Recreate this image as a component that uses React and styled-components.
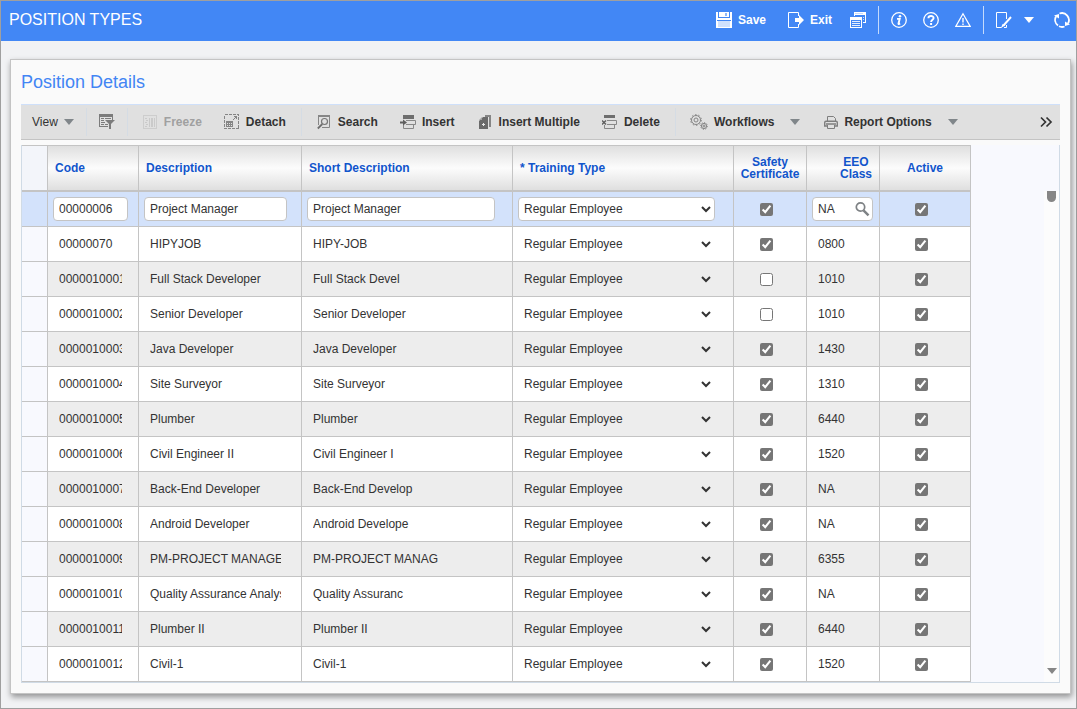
import React, { useState } from 'react';
import styled, { createGlobalStyle, css } from 'styled-components';

const ROWS = [
  { code: '00000006', description: 'Project Manager', short: 'Project Manager', safety: true, eeo: 'NA' },
  { code: '00000070', description: 'HIPYJOB', short: 'HIPY-JOB', safety: true, eeo: '0800' },
  { code: '0000010001', description: 'Full Stack Developer', short: 'Full Stack Devel', safety: false, eeo: '1010' },
  { code: '0000010002', description: 'Senior Developer', short: 'Senior Developer', safety: false, eeo: '1010' },
  { code: '0000010003', description: 'Java Developer', short: 'Java Developer', safety: true, eeo: '1430' },
  { code: '0000010004', description: 'Site Surveyor', short: 'Site Surveyor', safety: true, eeo: '1310' },
  { code: '0000010005', description: 'Plumber', short: 'Plumber', safety: true, eeo: '6440' },
  { code: '0000010006', description: 'Civil Engineer II', short: 'Civil Engineer I', safety: true, eeo: '1520' },
  { code: '0000010007', description: 'Back-End Developer', short: 'Back-End Develop', safety: true, eeo: 'NA' },
  { code: '0000010008', description: 'Android Developer', short: 'Android Develope', safety: true, eeo: 'NA' },
  { code: '0000010009', description: 'PM-PROJECT MANAGER', short: 'PM-PROJECT MANAG', safety: true, eeo: '6355' },
  { code: '0000010010', description: 'Quality Assurance Analyst', short: 'Quality Assuranc', safety: true, eeo: 'NA' },
  { code: '0000010011', description: 'Plumber II', short: 'Plumber II', safety: true, eeo: '6440' },
  { code: '0000010012', description: 'Civil-1', short: 'Civil-1', safety: true, eeo: '1520' },
];

export default function App() {
  const [selected, setSelected] = useState(0);

  return (
    <Page>
      <GlobalStyle />
      <Header>
        <PageTitle>POSITION TYPES</PageTitle>
        <HeaderGroup>
          <HeaderButton><SaveIcon />Save</HeaderButton>
          <HeaderButton $left={22}><ExitIcon />Exit</HeaderButton>
          <HeaderButton $left={18} aria-label="Windows"><WindowsIcon /></HeaderButton>
        </HeaderGroup>
        <HeaderGroup>
          <HeaderButton aria-label="Information"><InfoIcon /></HeaderButton>
          <HeaderButton $left={16} aria-label="Help"><HelpIcon /></HeaderButton>
          <HeaderButton $left={16} aria-label="Warnings"><WarningIcon /></HeaderButton>
        </HeaderGroup>
        <HeaderGroup>
          <HeaderButton aria-label="Edit page"><EditIcon /></HeaderButton>
          <HeaderButton $left={12} aria-label="Edit options"><Caret $color="#fff" /></HeaderButton>
          <HeaderButton $left={20} aria-label="Refresh"><RefreshIcon /></HeaderButton>
        </HeaderGroup>
      </Header>

      <Main>
        <Panel>
          <PanelTitle>Position Details</PanelTitle>
          <Toolbar>
            <ViewGroup>
              <ToolButton $plain>View<Caret /></ToolButton>
            </ViewGroup>
            <FilterGroup>
              <ToolButton aria-label="Query by example"><FilterIcon /></ToolButton>
            </FilterGroup>
            <ToolGroup>
              <ToolButton disabled><FreezeIcon />Freeze</ToolButton>
              <ToolButton><DetachIcon />Detach</ToolButton>
            </ToolGroup>
            <ToolGroup>
              <ToolButton><SearchPageIcon />Search</ToolButton>
              <ToolButton><InsertIcon />Insert</ToolButton>
              <ToolButton><InsertMultipleIcon />Insert Multiple</ToolButton>
              <ToolButton><DeleteIcon />Delete</ToolButton>
            </ToolGroup>
            <ToolGroup>
              <ToolButton><WorkflowsIcon />Workflows<MenuCaret /></ToolButton>
              <ToolButton><PrinterIcon />Report Options<MenuCaret /></ToolButton>
            </ToolGroup>
            <OverflowButton aria-label="More"><MoreIcon /></OverflowButton>
          </Toolbar>

          <GridArea>
            <Table>
              <colgroup>
                <Col $width={26} />
                <Col $width={91} />
                <Col $width={163} />
                <Col $width={211} />
                <Col $width={221} />
                <Col $width={73} />
                <Col $width={73} />
                <Col $width={91} />
              </colgroup>
              <thead>
                <tr>
                  <CornerCell />
                  <HeadCell>Code</HeadCell>
                  <HeadCell>Description</HeadCell>
                  <HeadCell>Short Description</HeadCell>
                  <HeadCell>* Training Type</HeadCell>
                  <HeadCell $align="center">Safety<br />Certificate</HeadCell>
                  <HeadCell $align="right"><Stacked>EEO<br />Class</Stacked></HeadCell>
                  <HeadCell $align="center">Active</HeadCell>
                </tr>
              </thead>
              <tbody>
                {ROWS.map((row, i) => (
                  <Row key={row.code} $selected={i === selected} onFocus={() => setSelected(i)}>
                    <RowHandle $selected={i === selected} />
                    <Cell><Field $width={75} $active={i === selected} aria-label="Code" defaultValue={row.code} /></Cell>
                    <Cell><Field $width={143} $active={i === selected} aria-label="Description" defaultValue={row.description} /></Cell>
                    <Cell><Field $width={188} $active={i === selected} aria-label="Short Description" defaultValue={row.short} /></Cell>
                    <Cell>
                      <Picker $active={i === selected} aria-label="Training Type" defaultValue="Regular Employee">
                        <option>Regular Employee</option>
                      </Picker>
                    </Cell>
                    <CheckCell><Check aria-label="Safety Certificate" defaultChecked={row.safety} /></CheckCell>
                    <Cell>
                      <Lookup $active={i === selected}>
                        <LookupInput aria-label="EEO Class" defaultValue={row.eeo} />
                        {i === selected && <LookupButton aria-label="Look up EEO Class"><LensIcon /></LookupButton>}
                      </Lookup>
                    </Cell>
                    <CheckCell><Check aria-label="Active" defaultChecked /></CheckCell>
                  </Row>
                ))}
              </tbody>
            </Table>
            <ScrollTrack>
              <ScrollThumb />
              <Caret $color="#868686" />
            </ScrollTrack>
          </GridArea>
        </Panel>
      </Main>
    </Page>
  );
}


// icons of the blue header
const SaveIcon = () => (
  <Icon viewBox="0 0 16 16" shapeRendering="crispEdges">
    <path fill="#fff" d="M0 0h15l1 1v15H0z" />
    <path fill="#4287f5" d="M2 0h1v5H2zM13 0h1v5h-1zM2 5h12v1H2z" />
    <path fill="#8fb8f9" d="M9 1h2v3H9z" />
    <path fill="#4287f5" d="M1 8h14v1H1z" />
    <path fill="#d0e1fd" d="M2 9h12v6H2z" />
  </Icon>
);

const ExitIcon = () => (
  <Icon viewBox="0 0 16 16">
    <path fill="none" stroke="#fff" d="M10.500 4V.5H.5v15h10V12" />
    <path fill="#fff" d="M7 6h4V3l5 5-5 5v-3H7z" />
  </Icon>
);

const WindowsIcon = () => (
  <Icon viewBox="0 0 16 16" shapeRendering="crispEdges">
    <path fill="#fff" d="M4 0h12v11h-3v-1h2V3H5v1H4z" />
    <path fill="#c9dcfc" d="M5 1h8v1H5zM13 5h1v1h-1zM13 7h1v1h-1z" />
    <path fill="#fff" d="M0 5h12v11H0z" />
    <path fill="#4287f5" d="M1 8h10v7H1z" />
    <path fill="#e6effe" d="M2 9h8v1H2zM2 11h8v1H2zM2 13h8v1H2z" />
  </Icon>
);

const InfoIcon = () => (
  <Icon viewBox="0 0 16 16">
    <circle cx="8" cy="8" r="7.300" fill="none" stroke="#fff" strokeWidth="1.300" />
    <circle cx="9" cy="4.300" r="1.300" fill="#fff" />
    <path fill="none" stroke="#fff" strokeWidth="1.900" d="M6 6.900h2.700L7.500 11.500q-.2.900 1.700.1" />
  </Icon>
);

const HelpIcon = () => (
  <Icon viewBox="0 0 16 16">
    <circle cx="8" cy="8" r="7.300" fill="none" stroke="#fff" strokeWidth="1.300" />
    <path fill="none" stroke="#fff" strokeWidth="1.900" d="M5.400 6.300C5.400 3.300 10.600 3.300 10.600 6c0 1.700-2.500 1.800-2.500 4" />
    <path fill="#fff" d="M7.100 11h2v2h-2z" />
  </Icon>
);

const WarningIcon = () => (
  <Icon viewBox="0 0 16 16">
    <path fill="none" stroke="#fff" strokeWidth="1.200" d="M8 1.800 15.200 14.400H.8z" />
    <path fill="none" stroke="#fff" strokeWidth="1.400" d="M8 6v4.500M8 11.500V13" />
  </Icon>
);

const EditIcon = () => (
  <Icon viewBox="0 0 16 16">
    <path fill="none" stroke="#fff" d="M10.500 7V.5H.5v15h5M10.500 13v2.500H8" />
    <path stroke="#fff" strokeWidth="1.900" d="M15 5 7.500 13.500" />
    <path fill="#fff" d="m6.500 12 2.500 1.500L5 16z" />
  </Icon>
);

const RefreshIcon = () => (
  <Icon viewBox="0 0 16 16">
    <path fill="none" stroke="#fff" strokeWidth="1.800" d="M4 13.500A7 7 0 0 1 2 4.500M5.500 1.500A7 7 0 0 1 14 11.500M10.500 14.500A7 7 0 0 1 5 14.300" />
    <path fill="#fff" d="M0 3.500 5 2v4.500zM16 12.500 11 14V9.500z" />
  </Icon>
);

// icons of the table toolbar
const FilterIcon = () => (
  <Icon viewBox="0 0 16 16">
    <path fill="#7c7c7c" d="M0 0h14v3H0zM0 0h1v13H0zM0 12h9v1H0zM13 0h1v6h-1zM2 4h3v1H2zM6 4h6v1H6zM2 6h3v1H2zM2 8h4v1H2zM2 10h3v1H2zM6 10h3v1H6z" />
    <path fill="#7c7c7c" d="M6 6h10l-4 4v5h-2v-5z" />
  </Icon>
);

const FreezeIcon = () => (
  <Icon viewBox="0 0 16 16" shapeRendering="crispEdges">
    <path fill="none" stroke="#cdcdcd" d="M1.500 1.500h13v13h-13z" />
    <path fill="#cacaca" d="M3 4h2v1H3zM4 6h2v1H4zM3 8h2v1H3zM4 10h2v1H4zM3 12h2v1H3zM7 4h1v9H7zM9 4h2v9H9zM12 4h1v9h-1z" />
  </Icon>
);

const DetachIcon = () => (
  <Icon viewBox="0 0 16 16" shapeRendering="crispEdges">
    <path fill="none" stroke="#858585" strokeDasharray="3 1" d="M.5.500h14v14H.5z" />
    <path fill="#858585" d="M2 7h7v6H2z" />
    <path fill="#e0e0e0" d="M3 9h1v1H3zM5 9h1v1H5zM7 9h1v1H7zM3 11h1v1H3zM5 11h1v1H5zM7 11h1v1H7z" />
    <path fill="#858585" d="M10 2h3v3h-1V4h-1v1h-1v1H9V5h1V4h1V3h-1z" />
  </Icon>
);

const SearchPageIcon = () => (
  <Icon viewBox="0 0 16 16">
    <path fill="none" stroke="#868686" d="M2.500 11V1.500h11v12H6" />
    <path fill="#868686" d="M2 1h12v2H2z" />
    <circle cx="8.500" cy="7.500" r="3" fill="none" stroke="#777" strokeWidth="1.200" />
    <path stroke="#707070" strokeWidth="1.800" d="m6.300 10-4.500 4.500" />
  </Icon>
);

const InsertIcon = () => (
  <Icon viewBox="0 0 16 16">
    <path fill="#6e6e6e" d="M3 1h11v4H3z" />
    <path fill="none" stroke="#888" d="M6 6.500h9.500v4H6M13.500 11v3.500h-10V11" />
    <path fill="#606060" d="M0 7.500h3V5.500l4 3-4 3v-2H0z" />
  </Icon>
);

const InsertMultipleIcon = () => (
  <Icon viewBox="0 0 16 16">
    <path fill="#858585" d="M8 1h6v12h-2V3H8z" />
    <path fill="#6a6a6a" d="M6 3h5v12H2V7z" />
    <path fill="#a5a5a5" d="M2 6 5 3v3z" />
    <path fill="#e8e8e8" d="M6 9h1v1h1v1H7v1H6v-1H5v-1h1z" />
  </Icon>
);

const DeleteIcon = () => (
  <Icon viewBox="0 0 16 16">
    <path fill="#6e6e6e" d="M2 1h11v3H2z" />
    <path fill="none" stroke="#888" d="M5 6.500h9.500v4H5M12.500 11v3.500h-10V11" />
    <path stroke="#606060" strokeWidth="1.400" d="m0 6.500 4 4M4 6.500l-4 4" />
  </Icon>
);

const WorkflowsIcon = () => (
  <WideIcon viewBox="0 0 18 16">
    <g fill="none" stroke="#858585">
      <circle cx="6" cy="6" r="4.500" />
      <circle cx="6" cy="6" r="2" />
      <circle cx="6" cy="6" r="5.400" strokeDasharray="1.500 1.900" />
      <circle cx="14" cy="12" r="2.600" />
      <circle cx="14" cy="12" r="1" />
      <circle cx="14" cy="12" r="3.400" strokeDasharray="1.200 1.400" />
    </g>
  </WideIcon>
);

const PrinterIcon = () => (
  <Icon viewBox="0 0 16 16">
    <path fill="none" stroke="#7e7e7e" d="M5.500 7V2.500h6l2 2V7M5.500 11v3.500h7V11" />
    <path fill="none" stroke="#7e7e7e" strokeWidth="1.400" d="M5 12H2.700V8.500q0-1.300 1.300-1.300h10q1.300 0 1.300 1.300V12H13M4 10h10" />
  </Icon>
);

const MoreIcon = () => (
  <Icon viewBox="0 0 16 16">
    <path fill="none" stroke="#333" strokeWidth="1.700" d="m3 3.500 4.500 4.500L3 12.500M8.500 3.500 13 8l-4.500 4.500" />
  </Icon>
);

const LensIcon = () => (
  <Icon viewBox="0 0 16 16">
    <circle cx="6.500" cy="6" r="4.200" fill="none" stroke="#7e8285" strokeWidth="1.700" />
    <path stroke="#7e8285" strokeWidth="2.400" d="m9.500 9.300 5 5" />
  </Icon>
);


const GlobalStyle = createGlobalStyle`
  * { box-sizing: border-box; }
  body {
    margin: 0;
    font-family: "Liberation Sans", Arial, sans-serif;
    font-size: 12px;
    color: #333;
  }
  button, input, select { font: inherit; color: inherit; }
`;

const Page = styled.div`
  display: flex;
  flex-direction: column;
  min-height: 100vh;
  border: 1px solid #9f9f9f;
  background: #f1f2f4;
`;

// blue bar on top
const Header = styled.header`
  display: flex;
  align-items: center;
  height: 40px;
  padding: 0 6px 2px 8px;
  background: #4287f5;
  color: #fff;
`;

const PageTitle = styled.h1`
  flex: 1;
  margin: 0;
  font-size: 16px;
  font-weight: normal;
`;

const HeaderGroup = styled.div`
  display: flex;
  align-items: center;
  height: 28px;

  & + & {
    margin-left: 12px;
    padding-left: 12px;
    border-left: 1px solid #c4dafc;
  }
`;

const HeaderButton = styled.button`
  display: flex;
  align-items: center;
  gap: 6px;
  margin: 0 0 0 ${(p) => p.$left || 0}px;
  padding: 0;
  border: 0;
  background: none;
  font-weight: bold;
`;

const Icon = styled.svg`
  flex: none;
  display: block;
  width: 16px;
  height: 16px;
`;

const WideIcon = styled(Icon)`
  width: 18px;
`;

const Caret = styled.span`
  border: 5px solid transparent;
  border-top: 6px solid ${(p) => p.$color || '#80868a'};
  border-bottom: 0;
`;

const MenuCaret = styled(Caret)`
  margin-left: 10px;
`;

const Main = styled.main`
  padding: 18px 5px 14px 9px;
`;

const Panel = styled.section`
  padding: 0 10px 10px;
  border: 1px solid #c4c4c4;
  background: #fafafa;
  box-shadow: 1px 3px 6px rgba(0, 0, 0, 0.4);
`;

const PanelTitle = styled.h2`
  margin: 0;
  color: #4285f4;
  font-size: 18px;
  font-weight: normal;
  line-height: 44px;
`;

// buttons above the table
const Toolbar = styled.div`
  display: flex;
  align-items: center;
  height: 36px;
  margin-bottom: 5px;
  border-top: 1px solid #cfe0fa;
  border-bottom: 1px solid #c4c4c4;
  background: #e0e0e0;
`;

const ToolGroup = styled.div`
  display: flex;
  align-items: center;
  gap: 22px;
  height: 28px;
  padding: 0 15px 0 14px;

  & + & {
    border-left: 1px solid #d5dce4;
  }
`;

const ViewGroup = styled(ToolGroup)`
  padding: 0 12px 0 11px;
`;

const FilterGroup = styled(ToolGroup)`
  padding: 0 12px;
`;

const ToolButton = styled.button`
  display: flex;
  align-items: center;
  gap: 6px;
  padding: 0;
  border: 0;
  background: none;
  font-weight: ${(p) => (p.$plain ? 'normal' : 'bold')};
  white-space: nowrap;

  &:disabled {
    color: #a0a0a0;
  }
`;

const OverflowButton = styled(ToolButton)`
  margin: 0 6px 0 auto;
`;

const GridArea = styled.div`
  display: flex;
  justify-content: space-between;
  border: solid #d0dbe6;
  border-width: 0 1px 1px;
  background: #f8f9fe;
`;

const Table = styled.table`
  table-layout: fixed;
  width: 949px;
  border-spacing: 0;
`;

const Col = styled.col`
  width: ${(p) => p.$width}px;
`;

const cellLines = css`
  border-right: 1px solid #c4c4c4;
  border-bottom: 1px solid #c4c4c4;
`;

const HeadCell = styled.th`
  ${cellLines}
  height: 47px;
  padding: 0 ${(p) => (p.$align === 'center' ? 0 : 7)}px;
  border-top: 1px solid #c4c4c4;
  border-bottom-width: 2px;
  background: linear-gradient(#dfdfdf, #fcfcfc 50%, #dfdfdf);
  color: #1155cc;
  line-height: 12px;
  text-align: ${(p) => p.$align || 'left'};
`;

const CornerCell = styled.td`
  ${cellLines}
  border-top: 1px solid #c4c4c4;
  border-bottom-width: 2px;
  background: #f3f5fa;
`;

const Stacked = styled.span`
  display: inline-block;
  text-align: center;
`;

const Row = styled.tr`
  background: ${(p) => (p.$selected ? '#d3e2fb' : '#fff')};

  &:nth-child(odd) {
    background: ${(p) => (p.$selected ? '#d3e2fb' : '#ededed')};
  }
`;

const Cell = styled.td`
  ${cellLines}
  height: 35px;
  padding: 0 0 0 5px;
`;

const CheckCell = styled(Cell)`
  padding: 0 7px 0 0;
  text-align: center;
`;

const RowHandle = styled(Cell)`
  background: ${(p) => (p.$selected ? '#d3e2fb' : '#f8f9fe')};
`;

const fieldBox = css`
  height: 24px;
  border: 1px solid ${(p) => (p.$active ? '#c4c4c4' : 'transparent')};
  border-radius: 4px;
  background-color: ${(p) => (p.$active ? '#fff' : 'transparent')};
`;

const Field = styled.input`
  ${fieldBox}
  display: block;
  width: ${(p) => p.$width}px;
  padding: 0 5px;
`;

const Picker = styled.select`
  ${fieldBox}
  display: block;
  width: 197px;
  padding: 0 1px;
`;

const Lookup = styled.div`
  ${fieldBox}
  display: flex;
  align-items: center;
  width: 61px;
  padding: 0 2px 0 5px;
`;

const LookupInput = styled.input`
  flex: 1;
  min-width: 0;
  padding: 0;
  border: 0;
  background: none;
`;

const LookupButton = styled.button`
  padding: 0;
  border: 0;
  background: none;
`;

const Check = styled.input.attrs({ type: 'checkbox' })`
  display: block;
  width: 13px;
  height: 13px;
  margin: 0 auto;
  accent-color: #767676;
`;

const ScrollTrack = styled.div`
  display: flex;
  flex-direction: column;
  align-items: center;
  justify-content: space-between;
  width: 15px;
  margin-top: 46px;
  padding-bottom: 8px;
  background: #fcfcfc;
`;

const ScrollThumb = styled.div`
  width: 9px;
  height: 11px;
  border-radius: 0 0 5px 5px;
  background: #868686;
`;
